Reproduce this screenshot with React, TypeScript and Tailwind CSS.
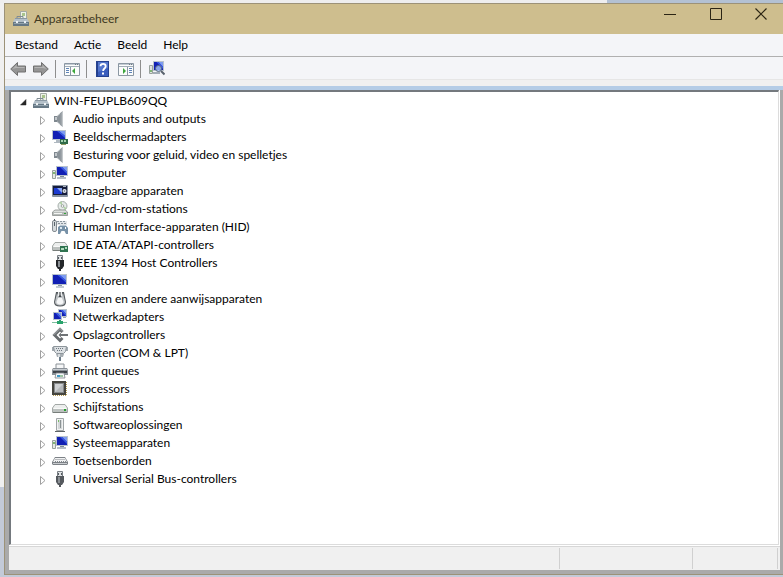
import { useState, type ReactNode } from 'react'

function Svg({ children }: { children: ReactNode }) {
  return (
    <svg width="16" height="16" viewBox="0 0 16 16" className="shrink-0" aria-hidden="true">
      {children}
    </svg>
  )
}

function Toolbox() {
  return (
    <Svg>
      <path d="M7.500.5h6v9h-6z" fill="#eef2e6" stroke="#a3aaa4" />
      <path d="M9 2h3v3H9z" fill="#a9c48c" />
      <path d="M4 7V5.500h6V7" fill="none" stroke="#7f8a93" />
      <path d="M2 7h12l2 4H0z" fill="#b4c0c9" />
      <path d="M2 7h12v1H2z" fill="#8a98a3" />
      <path d="M0 11h16v4H0z" fill="#667885" />
      <path d="M1 12h14v1H1z" fill="#94a4af" />
      <path d="M3 10h2v2H3zM11 10h2v2h-2z" fill="#eef2f4" />
    </Svg>
  )
}

function Speaker() {
  return (
    <Svg>
      <path d="M2 5h3v6H2z" fill="#7f888f" />
      <path d="M5 5l5-4.500v15L5 11z" fill="#a9b0b5" />
      <path d="M8.500 2L11 .3v15.400L8.500 14z" fill="#7c848b" />
      <path d="M9.500 1.500l1.500-1v15l-1.500-1z" fill="#c3c8cb" />
      <path d="M5 6l3-2.500v9L5 10z" fill="#8b9399" />
      <path d="M3 6h2v3H3z" fill="#c2c7cb" />
    </Svg>
  )
}

function Screen({ x = 0, y = 1, w = 14, h = 10 }: { x?: number; y?: number; w?: number; h?: number }) {
  return (
    <>
      <rect x={x} y={y} width={w} height={h} fill="#b9c3cd" />
      <rect x={x + 1} y={y + 1} width={w - 2} height={h - 2} fill="#1220b4" />
      <path d={`M${x + w / 2} ${y + 1}h${w / 2 - 1}v${h / 2}z`} fill="#7d9bf0" />
      <path d={`M${x + w / 2 - 2} ${y + 1}h2l${w / 2 - 1} ${h / 2}v2z`} fill="#3b5ce4" />
    </>
  )
}

function Monitor() {
  return (
    <Svg>
      <Screen x={0} y={1} w={15} h={11} />
      <path d="M6 12h4v1H6z" fill="#8d98a2" />
      <path d="M4 13h8v2H4z" fill="#c4ccd3" />
    </Svg>
  )
}

function DisplayAdapter() {
  return (
    <Svg>
      <Screen x={0} y={1} w={14} h={10} />
      <path d="M4 11h4v2H4zM2 13h8v1H2z" fill="#b0b9c1" />
      <path d="M8 10h8v5H8z" fill="#2f6b49" />
      <path d="M9 11h2v2H9zM12 11h2v2h-2z" fill="#a5d4b2" />
      <path d="M9 15h5v1H9z" fill="#8f9a62" />
    </Svg>
  )
}

function Computer() {
  return (
    <Svg>
      <Screen x={4} y={1} w={12} h={10} />
      <path d="M8 11h4v1H8z" fill="#7f8b96" />
      <path d="M5 12h9v2H5z" fill="#b5bec7" />
      <path d="M.5 5.500h3v8h-3z" fill="#e5e9e6" stroke="#98a19c" />
      <path d="M1 7h2v2H1z" fill="#7db573" />
    </Svg>
  )
}

function Portable() {
  return (
    <Svg>
      <rect x="0" y="2" width="16" height="12" rx="1" fill="#8a94a1" />
      <path d="M1 3h14v9H1z" fill="#161d3c" />
      <path d="M2 5h8v6H2z" fill="#1c3ad0" />
      <path d="M5 5h5v5z" fill="#8aa8f5" />
      <circle cx="12.500" cy="8" r="2" fill="#e3e8ed" />
      <circle cx="12.500" cy="8" r="0.800" fill="#5a6674" />
      <path d="M11 3h3v1h-3z" fill="#aab4c0" />
    </Svg>
  )
}

function DiscDrive() {
  return (
    <Svg>
      <circle cx="10.500" cy="5" r="4.500" fill="#e6ebe9" stroke="#a5ada9" />
      <path d="M10.500 5L7.500 1.500l2-1zM10.500 5l4 2-1 2z" fill="#a9cf9c" />
      <circle cx="10.500" cy="5" r="1.300" fill="#fff" stroke="#8b948f" strokeWidth="0.800" />
      <path d="M3 9h10l2.500 2v3.500H.5V11z" fill="#dde0de" stroke="#868c89" strokeWidth="0.800" />
      <path d="M1 11h14v3H1z" fill="#b7bcb9" />
      <path d="M2 12h8v1H2z" fill="#f4f5f4" />
      <path d="M12 12h2v1h-2z" fill="#2fa336" />
    </Svg>
  )
}

function HumanInterface() {
  return (
    <Svg>
      <rect x="0.500" y="1.500" width="4" height="11" rx="1.500" fill="#d5dadd" stroke="#848b91" />
      <path d="M2 3h1v4H2zM2 0h1v2H2z" fill="#59636a" />
      <path d="M5 2h10v4H5z" fill="#e2e6e9" />
      <path d="M5 2h2v1H5zM8 2h2v1H8zM11 2h2v1h-2zM6 4h2v1H6zM9 4h2v1H9zM12 4h2v1h-2z" fill="#8a949d" />
      <path d="M6 8l2-1.500h6L16 9v6h-2l-1.500-3h-3L8 15H6z" fill="#7892a8" />
      <path d="M8 8h2v2H8z" fill="#dce8f1" />
      <path d="M13 8h1v2h-1z" fill="#fff" />
    </Svg>
  )
}

function Drive({ children }: { children?: ReactNode }) {
  return (
    <Svg>
      <path d="M3 5.500h10L15.500 9v4.500H.5V9z" fill="#eceeed" stroke="#a3a8a6" />
      <path d="M1 10h14v3H1z" fill="#bcc1bf" />
      <path d="M2 9h12v1H2z" fill="#f8f9f8" />
      <path d="M1 13h14v1H1z" fill="#777d7a" />
      {children ?? <path d="M12 10h2v2h-2z" fill="#24a02d" />}
    </Svg>
  )
}

function IdeController() {
  return (
    <Drive>
      <path d="M8 9h8v6H8z" fill="#2f7350" />
      <path d="M9 11h3v2H9zM13 10h2v2h-2z" fill="#b0dabc" />
    </Drive>
  )
}

function Plug({ body }: { body: string }) {
  return (
    <Svg>
      <path d="M5.500.5h5v5h-5z" fill="#dfe2e4" stroke="#7a8086" />
      <path d="M6 2h1v2H6zM9 2h1v2H9z" fill="#555c62" />
      <path d="M4 5h8v6l-2 3H6l-2-3z" fill={body} />
      <path d="M6 6h2v6H6z" fill="#8b9095" />
      <path d="M7 13h2v3H7z" fill={body} />
    </Svg>
  )
}

function FireWire() {
  return <Plug body="#25272a" />
}

function Usb() {
  return <Plug body="#55595e" />
}

function Mouse() {
  return (
    <Svg>
      <path d="M4 1h8l2 10c0 3-2 4.500-6 4.500S2 14 2 11z" fill="#53585c" />
      <path d="M5 2l2 4h2l2-4 2 9c0 2-2 3.500-5 3.500S3 13 3 11z" fill="#bfc3c6" />
      <path d="M6 7h4l1.500 4c0 1.500-1.500 2.500-3.500 2.500S4.500 12.500 4.500 11z" fill="#f5f6f7" />
      <path d="M6 1h4v4H9L8 4 7 5H6z" fill="#eceeef" />
      <path d="M7.500 1h1v5h-1z" fill="#2c3034" />
    </Svg>
  )
}

function Network() {
  return (
    <Svg>
      <Screen x={6} y={0} w={9} h={8} />
      <Screen x={1} y={3} w={9} h={8} />
      <path d="M11 8h3v1h-3z" fill="#98a5b1" />
      <path d="M7 11h2v2H7z" fill="#2e9a6c" />
      <path d="M0 13h15v1H0z" fill="#7fbf9f" />
      <path d="M5 12h6v3H5z" fill="#28a36c" />
    </Svg>
  )
}

function Storage() {
  return (
    <Svg>
      <path d="M8 .5l3.500 3.500L9.500 6 8 4.500 4.500 8 8 11.500 9.500 10l2 2L8 15.500.5 8z" fill="#676b6e" />
      <path d="M8 .5l3.500 3.500-1 1L8 2.500 2.500 8H.5z" fill="#8e9295" />
      <path d="M6.500 8L9 5.500V7h7v2H9v1.500z" fill="#6f7376" />
    </Svg>
  )
}

function Port() {
  return (
    <Svg>
      <path d="M0 2h2v4H0zM14 2h2v4h-2z" fill="#a3aab0" />
      <path d="M1.500 1.500h13l-1 5-2 2h-7l-2-2z" fill="#dce0e3" stroke="#8d959b" />
      <path d="M4 3h1v1H4zM6 3h1v1H6zM8 3h1v1H8zM10 3h1v1h-1zM5 5h1v1H5zM7 5h1v1H7zM9 5h1v1H9z" fill="#6f7880" />
      <path d="M4 9h8l-1 3H5z" fill="#a7aeb3" />
      <path d="M6 9h2v3H6z" fill="#d9dde0" />
      <path d="M7 12h2v4H7z" fill="#6b7c8a" />
    </Svg>
  )
}

function Printer() {
  return (
    <Svg>
      <path d="M4 1h8v5H4z" fill="#f5f6f7" stroke="#8c9298" />
      <path d="M1 5h14l1 2v5H0V7z" fill="#8a9198" />
      <path d="M1 8h14v2H1z" fill="#3c4248" />
      <path d="M1 6h14v1H1z" fill="#c5cacf" />
      <path d="M4 10h8l1 5H3z" fill="#f4f6f8" stroke="#7d848a" strokeWidth="0.800" />
      <path d="M5 12h3v2H5z" fill="#3d9ac4" />
      <path d="M8 12h3v2H8z" fill="#9cc5a3" />
    </Svg>
  )
}

function Chip() {
  return (
    <Svg>
      <path d="M0 0h14v14H0z" fill="#45453f" />
      <path d="M14.500 1v14M1 14.500h14" stroke="#b59b52" strokeDasharray="1 1" />
      <path d="M2 2h10v10H2z" fill="#85888a" />
      <path d="M3 3h8v8H3z" fill="#b5b8ba" />
      <path d="M3 3h8l-8 8z" fill="#ced1d3" />
    </Svg>
  )
}

function Software() {
  return (
    <Svg>
      <path d="M4.500 1.500h7v12h-7z" fill="#f1f2f2" stroke="#a0a5a7" />
      <path d="M6 3h4v9H6z" fill="#d4d8d9" />
      <path d="M8 3h1v8H8z" fill="#8b9294" />
      <path d="M6 3h1v2H6z" fill="#7bbd69" />
      <path d="M3 14h10v1H3z" fill="#5e6466" />
    </Svg>
  )
}

function Keyboard() {
  return (
    <Svg>
      <path d="M3 4h10l3 5v2l-1 1H1l-1-1V9z" fill="#7c8186" />
      <path d="M3 5h10l2 4H1z" fill="#f1f2f3" />
      <path d="M3.500 6.500h9M3 8.500h11" stroke="#84898d" strokeDasharray="1 1" />
      <path d="M1 10h14v1H1z" fill="#c8cbce" />
    </Svg>
  )
}

function Arrow({ flip = false }: { flip?: boolean }) {
  return (
    <Svg>
      <g transform={flip ? 'matrix(-1 0 0 1 16 0)' : undefined}>
        <path d="M.7 8L7.500 1.500V5h8v6h-8v3.500z" fill="#959595" stroke="#707070" />
        <path d="M2.500 8L6.500 4v2h8v1H6z" fill="#b5b5b5" />
      </g>
    </Svg>
  )
}

function PanelIcon({ flip = false }: { flip?: boolean }) {
  return (
    <Svg>
      <path d="M.5 2.500h15v12H.5z" fill="#fbfcfc" stroke="#8b97a3" />
      <path d="M1 3h14v1H1z" fill="#c3cbd3" />
      <path d="M1 5h14v1H1z" fill="#a2adb8" />
      <path d="M11 3h1v1h-1zM13 3h1v1h-1z" fill="#6d7984" />
      <g transform={flip ? 'matrix(-1 0 0 1 16 0)' : undefined}>
        <path d="M6 6h1v8H6z" fill="#8b97a3" />
        <path d="M2 7.500h3M2 9.500h3M2 11.500h3" stroke="#5e83b8" />
        <path d="M11 7v6l-3-3z" fill="#3da63c" />
      </g>
    </Svg>
  )
}

function HelpIcon() {
  return (
    <Svg>
      <path d="M1 0h13v16H1z" fill="#24418f" />
      <path d="M3 1h10v14H3z" fill="#3a5dbd" />
      <path d="M3 1h10v6L3 11z" fill="#5376cd" />
      <path
        d="M5.500 5.200C5.500 2 10.700 2 10.700 5.200 10.700 7.500 8.100 7.500 8.100 10"
        fill="none"
        stroke="#fff"
        strokeWidth="1.800"
      />
      <path d="M7 11.500h2v2H7z" fill="#fff" />
    </Svg>
  )
}

function ScanIcon() {
  return (
    <Svg>
      <Screen x={4} y={0} w={11} h={10} />
      <path d="M.5 4.500h3v8h-3z" fill="#dfe3e1" stroke="#98a19c" />
      <path d="M1 9h2v2H1z" fill="#7db573" />
      <path d="M4 11h7v2H4z" fill="#a2acb6" />
      <circle cx="9.500" cy="7.500" r="3" fill="#a9c6f7" fillOpacity="0.800" stroke="#56677c" />
      <path d="M12 10l3.500 3.500" stroke="#59636e" strokeWidth="2" />
    </Svg>
  )
}

const devices = [
  { name: 'Audio inputs and outputs', icon: Speaker },
  { name: 'Beeldschermadapters', icon: DisplayAdapter },
  { name: 'Besturing voor geluid, video en spelletjes', icon: Speaker },
  { name: 'Computer', icon: Computer },
  { name: 'Draagbare apparaten', icon: Portable },
  { name: 'Dvd-/cd-rom-stations', icon: DiscDrive },
  { name: 'Human Interface-apparaten (HID)', icon: HumanInterface },
  { name: 'IDE ATA/ATAPI-controllers', icon: IdeController },
  { name: 'IEEE 1394 Host Controllers', icon: FireWire },
  { name: 'Monitoren', icon: Monitor },
  { name: 'Muizen en andere aanwijsapparaten', icon: Mouse },
  { name: 'Netwerkadapters', icon: Network },
  { name: 'Opslagcontrollers', icon: Storage },
  { name: 'Poorten (COM & LPT)', icon: Port },
  { name: 'Print queues', icon: Printer },
  { name: 'Processors', icon: Chip },
  { name: 'Schijfstations', icon: Drive },
  { name: 'Softwareoplossingen', icon: Software },
  { name: 'Systeemapparaten', icon: Computer },
  { name: 'Toetsenborden', icon: Keyboard },
  { name: 'Universal Serial Bus-controllers', icon: Usb },
]

function Expander({ open, label, onClick }: { open: boolean; label: string; onClick?: () => void }) {
  return (
    <button type="button" aria-label={label} aria-expanded={open} onClick={onClick} className="mr-[2px] h-4 w-3 shrink-0 pt-1">
      <svg width="10" height="12" viewBox="0 0 10 12" aria-hidden="true">
        {open ? (
          <path d="M7 2.500V8H1.500z" fill="#262626" stroke="#262626" strokeWidth="0.500" />
        ) : (
          <path d="M2.500 1.500l4.500 4-4.500 4z" fill="#fff" stroke="#a0a0a0" />
        )}
      </svg>
    </button>
  )
}

function TitleBar() {
  return (
    <header className="flex h-[30px] shrink-0 items-center bg-[#cebe8e] pl-2 text-[#40391f]">
      <Toolbox />
      <h1 className="ml-[5px] flex-1">Apparaatbeheer</h1>
      <button type="button" aria-label="Minimaliseren" className="flex h-5 w-[46px] items-center justify-center self-start">
        <svg width="12" height="12" viewBox="0 0 12 12">
          <path d="M0 6.500h12" stroke="#2b2514" />
        </svg>
      </button>
      <button type="button" aria-label="Maximaliseren" className="flex h-5 w-[46px] items-center justify-center self-start">
        <svg width="12" height="12" viewBox="0 0 12 12">
          <path d="M.5.5h11v11H.5z" fill="none" stroke="#2b2514" />
        </svg>
      </button>
      <button type="button" aria-label="Sluiten" className="flex h-5 w-[44px] items-center justify-center self-start">
        <svg width="12" height="12" viewBox="0 0 12 12">
          <path d="M.5.5l11 11M11.500.5l-11 11" stroke="#2b2514" strokeWidth="1.200" />
        </svg>
      </button>
    </header>
  )
}

function ToolButton({ label, children }: { label: string; children: ReactNode }) {
  return (
    <button type="button" aria-label={label} className="h-4 w-4">
      {children}
    </button>
  )
}

function Separator() {
  return <span className="-ml-px mr-px h-[18px] w-px bg-[#8e8e8e]" />
}

function Toolbar() {
  return (
    <div className="flex h-[23px] shrink-0 items-center gap-[7px] border-b border-[#e6e6e6] bg-[#f4f5f8] pt-[2px] pl-[5px]">
      <ToolButton label="Vorige"><Arrow /></ToolButton>
      <ToolButton label="Volgende"><Arrow flip /></ToolButton>
      <Separator />
      <ToolButton label="Consolestructuur"><PanelIcon /></ToolButton>
      <Separator />
      <ToolButton label="Help"><HelpIcon /></ToolButton>
      <ToolButton label="Actievenster"><PanelIcon flip /></ToolButton>
      <Separator />
      <ToolButton label="Zoeken naar gewijzigde apparaten"><ScanIcon /></ToolButton>
    </div>
  )
}

export default function App() {
  const [open, setOpen] = useState(true)

  return (
    <div className="flex min-h-screen flex-col bg-[#c3cad8] font-['Lato',sans-serif] text-[12px] leading-[18px] text-black">
      <div className="flex h-[3px] shrink-0">
        <div className="w-[607px] bg-[#eeeeee]" />
        <div className="flex-1 bg-[#b3c1d3]" />
      </div>
      <div className="flex flex-1">
        <div className="flex w-1 flex-col">
          <div className="h-[484px] bg-[#f0f0f0]" />
        </div>
        <div className="mb-[2px] flex min-w-0 flex-1 flex-col border-t border-b border-l border-[#9c9278] bg-[#aaaaaa]">
          <TitleBar />
          <nav className="flex h-[23px] shrink-0 items-center border-b border-[#b0b0b0] bg-[#f4f5f8] pl-[2px]">
            {['Bestand', 'Actie', 'Beeld', 'Help'].map((item) => (
              <button key={item} type="button" className="px-2">
                {item}
              </button>
            ))}
          </nav>
          <Toolbar />
          <div className="h-[6px] shrink-0 bg-[#f0f0f0]" />
          <div className="h-1 shrink-0 bg-[#b4cce6]" />
          <main className="mr-[3px] mb-1 ml-1 flex flex-1 flex-col bg-white">
            <div className="mr-px flex-1 border-t-2 border-r border-b border-l-2 border-t-[#74797e] border-r-[#dcdcdc] border-b-[#dcdcdc] border-l-[#74797e]">
              <ul role="tree" aria-label="Apparaten">
                <li role="treeitem" aria-expanded={open}>
                  <div className="flex h-[18px] items-center pl-2">
                    <Expander open={open} label="WIN-FEUPLB609QQ" onClick={() => setOpen(!open)} />
                    <Toolbox />
                    <span className="ml-[5px]">WIN-FEUPLB609QQ</span>
                  </div>
                  {open && (
                    <ul role="group">
                      {devices.map(({ name, icon: Icon }) => (
                        <li key={name} role="treeitem" className="flex h-[18px] items-center pl-[27px]">
                          <Expander open={false} label={name} />
                          <Icon />
                          <span className="ml-[5px]">{name}</span>
                        </li>
                      ))}
                    </ul>
                  )}
                </li>
              </ul>
            </div>
            <footer className="mt-px flex h-6 shrink-0 border-t border-[#d7d7d7] bg-[#f0f0f0] py-px pr-[2px]">
              <div className="flex-1 border-r border-[#d0d0d0]" />
              <div className="w-[133px] border-r border-[#d0d0d0]" />
              <div className="w-[85px] border-r border-[#d0d0d0]" />
            </footer>
          </main>
        </div>
      </div>
    </div>
  )
}
